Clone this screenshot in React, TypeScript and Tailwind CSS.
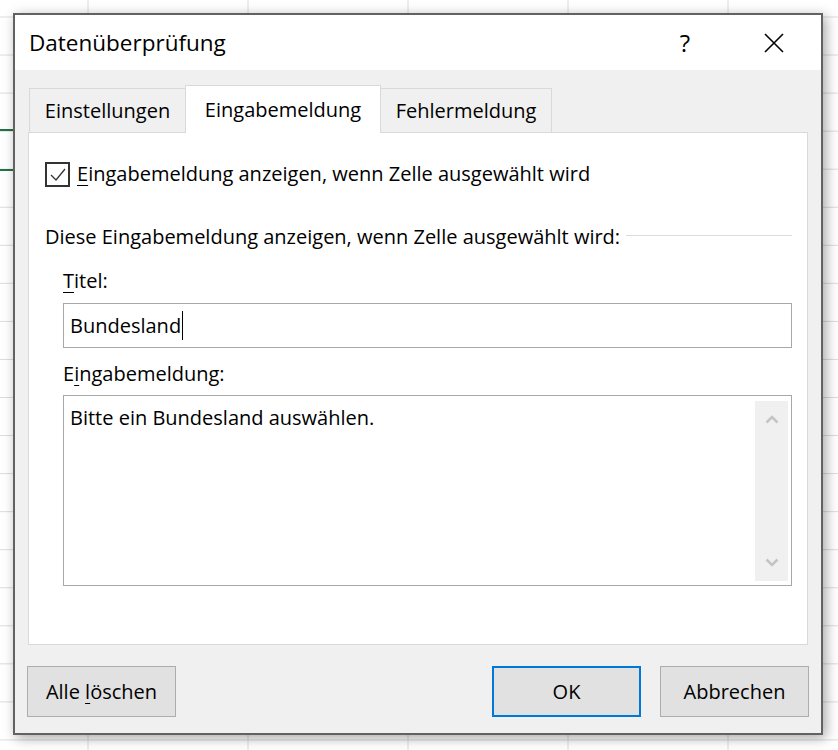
import React from 'react';

const rows = Array.from({ length: 20 }, (_, i) => 17 + i * 38.05);
const cols = [88, 248, 408, 568, 728];

const SheetGrid: React.FC = () => (
    <svg className="absolute inset-0" width="838" height="750" viewBox="0 0 838 750">
        {rows.map(y => (
            <line key={'r' + y} x1="0" x2="838" y1={y} y2={y} stroke="#dcdcdc" strokeWidth="1" />
        ))}
        {cols.map(x => (
            <line key={'c' + x} x1={x} x2={x} y1="0" y2="750" stroke="#dcdcdc" strokeWidth="1" />
        ))}
        <line x1="0" x2="16" y1="130" y2="130" stroke="#217346" strokeWidth="2" />
        <line x1="0" x2="16" y1="170" y2="170" stroke="#217346" strokeWidth="2" />
    </svg>
);

const Tab: React.FC<{ label: string; active?: boolean; width: string }> = ({ label, active, width }) => (
    <div
        className={`flex items-center justify-center border border-b-0 border-[#d9d9d9] leading-[28px] ${width}
            ${active ? 'relative z-10 -mb-px h-[48px] -ml-px -mr-px bg-white' : 'h-[44px] bg-[#f0f0f0]'}`}
    >
        {label}
    </div>
);

const Button: React.FC<{ children: React.ReactNode; primary?: boolean }> = ({ children, primary }) => (
    <button
        className={`flex h-[51px] w-[149px] items-center justify-center bg-[#e1e1e1] leading-[28px] text-black
            ${primary ? 'border-2 border-[#0078d7]' : 'border border-[#adadad]'}`}
    >
        <span>{children}</span>
    </button>
);

const App: React.FC = () => {
    return (
        <div className="relative h-[750px] w-[838px] overflow-hidden bg-white pl-[13px] pt-[13px] font-['Open_Sans','Noto_Sans',sans-serif] text-[20px] text-black">
            <SheetGrid />
            <div className="relative flex h-[722px] w-[810px] flex-col border-2 border-[#626262] bg-[#f0f0f0] shadow-[3px_3px_12px_rgba(0,0,0,0.35)]">
                {/* title bar */}
                <div className="flex h-[55px] items-center bg-white pl-[14px]">
                    <span className="flex-1 text-[22.5px] leading-[32px]">Datenüberprüfung</span>
                    <span className="w-[40px] text-center text-[24px] leading-[32px]">?</span>
                    <span className="ml-[49px] mr-[27px] flex w-[40px] items-center justify-center">
                        <svg width="20" height="20" viewBox="0 0 20 20">
                            <path d="M1 1 L19 19 M19 1 L1 19" stroke="#000" strokeWidth="1.6" fill="none" />
                        </svg>
                    </span>
                </div>

                {/* body */}
                <div className="flex flex-1 flex-col px-[13px] pt-[15px]">
                    <div className="flex items-end pl-px">
                        <Tab label="Einstellungen" width="w-[157px]" />
                        <Tab label="Eingabemeldung" width="w-[196px]" active />
                        <Tab label="Fehlermeldung" width="w-[172px]" />
                    </div>

                    <div className="box-border flex h-[513px] flex-col border border-[#d9d9d9] bg-white pl-[16px] pr-[15px]">
                        <div className="mt-[27px] flex h-[28px] items-center">
                            <span className="flex h-[25px] w-[25px] items-center justify-center border-2 border-[#333]">
                                <svg width="19" height="19" viewBox="0 0 19 19">
                                    <path d="M3 10 L8 15 L17 4" stroke="#333" strokeWidth="1.3" fill="none" />
                                </svg>
                            </span>
                            <span className="ml-[7px] leading-[28px]">
                                <u className="decoration-1 underline-offset-[4px]">E</u>ingabemeldung anzeigen, wenn Zelle ausgewählt wird
                            </span>
                        </div>

                        <div className="mt-[35px] flex h-[28px]">
                            <span className="leading-[28px]">Diese Eingabemeldung anzeigen, wenn Zelle ausgewählt wird:</span>
                            <div className="ml-[6px] mt-[12px] flex-1 border-t border-[#dcdcdc]" />
                        </div>

                        <div className="ml-[18px] flex flex-col">
                            <span className="mt-[16px] leading-[28px]">
                                <u className="decoration-1 underline-offset-[4px]">T</u>itel:
                            </span>
                            <div className="mt-[8px] flex h-[45px] items-center border border-[#a8a8a8] pl-[6px]">
                                <span className="leading-[28px]">Bundesland</span>
                                <span className="ml-px inline-block h-[29px] w-px bg-black" />
                            </div>

                            <span className="mt-[12px] leading-[28px]">
                                E<u className="decoration-1 underline-offset-[4px]">i</u>ngabemeldung:
                            </span>
                            <div className="mt-[7px] flex h-[191px] border border-[#a8a8a8]">
                                <div className="flex-1 pl-[6px] pt-[8px] leading-[28px]">Bitte ein Bundesland auswählen.</div>
                                <div className="mb-[4px] mr-[3px] mt-[5px] flex w-[33px] flex-col items-center justify-between bg-[#f0f0f0] py-[14px]">
                                    <svg width="14" height="9" viewBox="0 0 14 9">
                                        <path d="M1.5 7.5 L7 2 L12.5 7.5" stroke="#c4c4c4" strokeWidth="2.6" fill="none" />
                                    </svg>
                                    <svg width="14" height="9" viewBox="0 0 14 9">
                                        <path d="M1.5 1.5 L7 7 L12.5 1.5" stroke="#c4c4c4" strokeWidth="2.6" fill="none" />
                                    </svg>
                                </div>
                            </div>
                        </div>
                    </div>

                    <div className="mt-[21px] flex items-center">
                        <div className="-ml-px">
                            <Button>
                                Alle <u className="decoration-1 underline-offset-[4px]">l</u>öschen
                            </Button>
                        </div>
                        <div className="-mr-px ml-auto flex gap-[19px]">
                            <Button primary>OK</Button>
                            <Button>Abbrechen</Button>
                        </div>
                    </div>
                </div>
            </div>
        </div>
    );
};

export default App;
